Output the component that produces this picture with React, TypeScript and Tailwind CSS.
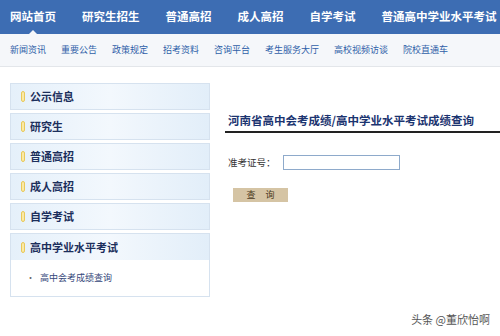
import React from "react"

const topNav = ["网站首页", "研究生招生", "普通高招", "成人高招", "自学考试", "普通高中学业水平考试"]
const subNav = ["新闻资讯", "重要公告", "政策规定", "招考资料", "咨询平台", "考生服务大厅", "高校视频访谈", "院校直通车"]
const sideItems = ["公示信息", "研究生", "普通高招", "成人高招", "自学考试"]

const font = { fontFamily: '"Noto Sans CJK SC", "Noto Sans", sans-serif' }

function Marker() {
  return <span className="mr-[5px] inline-block h-[11px] w-[4px] rounded-[2px] border border-[#e8c95a] bg-[#fbe9a6]" />
}

function SideItem({ label }: { label: string }) {
  return (
    <div className="flex h-[27px] items-center border border-[#d6e2ef] bg-gradient-to-r from-[#e5f0fa] via-[#f3f8fd] to-[#e2eef9] pl-[10px]">
      <Marker />
      <span className="text-[11px] font-bold text-[#1c2f5c]">{label}</span>
    </div>
  )
}

export default function App() {
  return (
    <div className="relative h-[336px] w-[500px] overflow-hidden bg-white" style={font}>
      {/* top nav */}
      <div className="relative flex h-[34px] items-center gap-[26px] whitespace-nowrap bg-[#3d6db3] pl-[10px]">
        {topNav.map((t) => (
          <span key={t} className="shrink-0 text-[11.5px] font-bold text-white">
            {t}
          </span>
        ))}
        <span className="absolute bottom-0 left-[29px] h-0 w-0 border-x-[4px] border-b-[4px] border-x-transparent border-b-[#f5f7fa]" />
      </div>

      {/* sub nav */}
      <div className="flex h-[33px] items-center gap-[15px] whitespace-nowrap border-b border-[#e3e6ea] bg-[#f5f7fa] pl-[10px]">
        {subNav.map((t) => (
          <span key={t} className="shrink-0 text-[9px] text-[#2f5fa8]">
            {t}
          </span>
        ))}
      </div>

      <div className="flex">
        {/* sidebar */}
        <div className="ml-[10px] mt-[16px] flex w-[200px] flex-col gap-[3px]">
          {sideItems.map((s) => (
            <SideItem key={s} label={s} />
          ))}
          <div className="border border-[#d6e2ef] bg-white">
            <div className="flex h-[26px] items-center bg-gradient-to-r from-[#e5f0fa] via-[#f3f8fd] to-[#e2eef9] pl-[10px]">
              <Marker />
              <span className="text-[11px] font-bold text-[#1c2f5c]">高中学业水平考试</span>
            </div>
            <div className="flex h-[36px] items-center pl-[15px] text-[9px] text-[#35477a]">
              <span className="mr-[5px] text-[#666]">•</span>
              高中会考成绩查询
            </div>
          </div>
        </div>

        {/* content */}
        <div className="ml-[15px] mt-[46px] flex-1">
          <div className="border-b-2 border-[#222] pb-[4px] pl-[3px] text-[11.5px] font-bold leading-[14px] text-[#1b3470]">
            河南省高中会考成绩/高中学业水平考试成绩查询
          </div>
          <div className="mt-[22px] flex items-center pl-[3px]">
            <span className="text-[9.5px] text-[#333]">准考证号：</span>
            <input
              type="text"
              className="ml-[7px] h-[15px] w-[117px] border border-[#8eaacb] bg-white outline-none"
            />
          </div>
          <button
            type="button"
            className="ml-[8px] mt-[18px] flex h-[14px] w-[55px] items-center justify-center gap-[10px] bg-[#d5c4a4] text-[9px] text-[#4a3a22]"
          >
            <span>查</span>
            <span>询</span>
          </button>
        </div>
      </div>

      <div className="absolute bottom-[9px] right-[10px] text-[11px] text-[#555]">头条 @董欣怡啊</div>
    </div>
  )
}
